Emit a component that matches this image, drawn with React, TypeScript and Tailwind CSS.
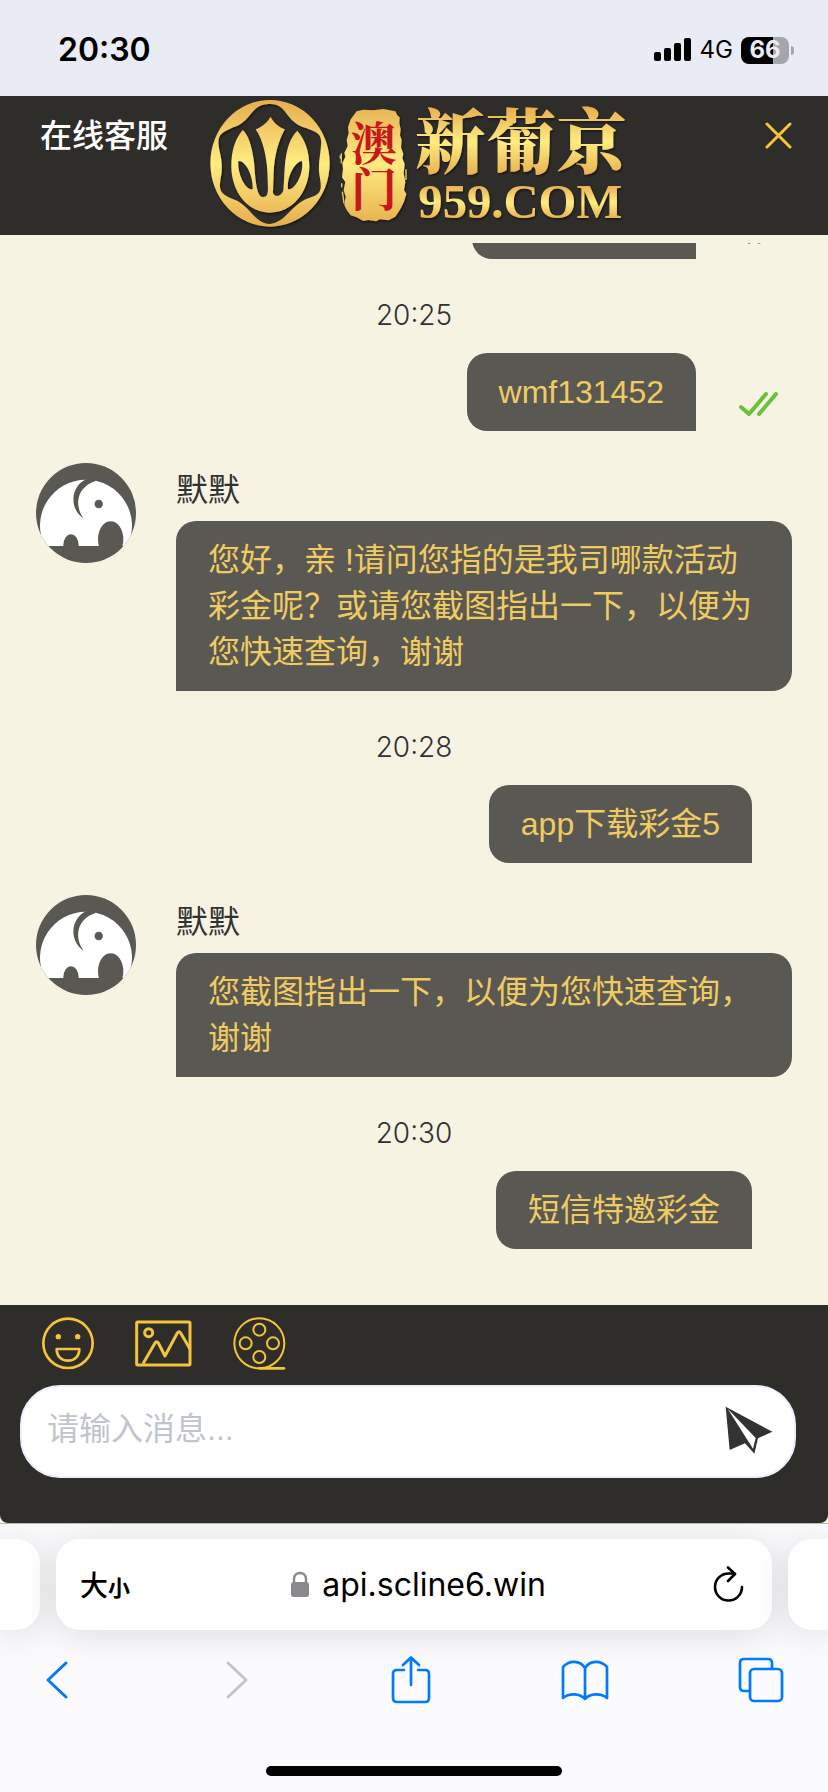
import { useState } from 'react'

type Message =
  | { id: number; from: 'user'; text: string; read?: boolean; time: string }
  | { id: number; from: 'agent'; name: string; text: string }

const messages: Message[] = [
  { id: 1, from: 'user', time: '20:25', text: 'wmf131452', read: true },
  { id: 2, from: 'agent', name: '默默', text: '您好，亲 !请问您指的是我司哪款活动彩金呢？或请您截图指出一下，以便为您快速查询，谢谢' },
  { id: 3, from: 'user', time: '20:28', text: 'app下载彩金5' },
  { id: 4, from: 'agent', name: '默默', text: '您截图指出一下，以便为您快速查询，谢谢' },
  { id: 5, from: 'user', time: '20:30', text: '短信特邀彩金' },
]

function StatusBar() {
  return (
    <div className="flex h-24 items-center justify-between bg-[#eaecf5] pr-[34px] pl-[58px] pt-1 text-black">
      <span className="text-[32px] leading-10 font-semibold">20:30</span>
      <div className="flex items-center gap-2">
        <svg className="h-6 w-[38px]" viewBox="0 0 38 24">
          <rect x="0" y="14" width="7" height="9" rx="2" />
          <rect x="10" y="10" width="7" height="13" rx="2" />
          <rect x="20" y="5" width="7" height="18" rx="2" />
          <rect x="30" y="0" width="7" height="23" rx="2" />
        </svg>
        <span className="text-2xl leading-8">4G</span>
        <div className="flex items-center gap-0.5">
          <div className="flex h-[27px] w-12 items-center justify-center rounded-lg bg-linear-to-r from-black from-66% to-[#a5a6ab] to-66% text-2xl font-bold text-[#eaecf5]">
            66
          </div>
          <div className="h-[9px] w-[3px] rounded-r-full bg-[#a5a6ab]"></div>
        </div>
      </div>
    </div>
  )
}

function Logo() {
  return (
    <svg className="h-[130px] w-[418px] shrink-0 overflow-visible" viewBox="30 27 1254 390" role="img" aria-label="澳门新葡京 959.COM">
      <defs>
        <linearGradient id="gold-emblem" gradientUnits="userSpaceOnUse" x1="0" y1="30" x2="0" y2="410">
          <stop offset="0" stopColor="#e6ad4e" />
          <stop offset="0.5" stopColor="#ffec80" />
          <stop offset="1" stopColor="#e6ad4e" />
        </linearGradient>
        <linearGradient id="gold-name" gradientUnits="userSpaceOnUse" x1="0" y1="55" x2="0" y2="255">
          <stop offset="0" stopColor="#e9b04f" />
          <stop offset="0.5" stopColor="#ffec80" />
          <stop offset="1" stopColor="#e9b04f" />
        </linearGradient>
        <linearGradient id="gold-domain" gradientUnits="userSpaceOnUse" x1="0" y1="288" x2="0" y2="386">
          <stop offset="0" stopColor="#e9b04f" />
          <stop offset="0.5" stopColor="#ffec80" />
          <stop offset="1" stopColor="#e9b04f" />
        </linearGradient>
        <filter id="logo-shadow" x="-5%" y="-5%" width="110%" height="110%">
          <feDropShadow dx="3" dy="4" stdDeviation="3" floodColor="#000" floodOpacity="0.6" />
        </filter>
      </defs>
      <g filter="url(#logo-shadow)">
        <g fill="url(#gold-emblem)" fillRule="evenodd">
          <path d="M31 220a179 190 0 1 0 358 0a179 190 0 1 0 -358 0Z M205 42C265 38 250 95 320 115C355 128 366 135 363 165C361 200 352 225 360 265C366 305 362 312 325 325C270 345 260 398 208 402C160 398 150 345 100 328C60 312 56 300 62 265C68 240 66 210 58 180C50 135 60 130 100 112C155 95 150 45 205 42Z" />
          <path d="M128 120C145 135 155 165 162 215C166 260 168 318 188 321C207 322 204 300 203 270C203 210 190 150 167 118C185 110 200 100 212 80C222 100 238 112 255 118C236 150 222 200 221 250L219 308C222 322 245 321 250 300C256 250 248 165 292 122C316 150 329 185 328 235C325 310 275 368 210 368C145 368 97 310 94 235C93 190 102 150 128 120Z M115 213C135 210 160 255 158 298C135 300 112 250 115 213Z M306 213C285 215 260 260 264 298C285 300 312 250 306 213Z" />
          <path d="M470 64L490 59L520 61L550 57L586 64L592 76L599 82L598 100L602 118L600 136L605 150L603 172L610 192L607 205L614 222L611 250L616 276L612 300L619 312L612 335L604 352L598 362L586 380L566 391L540 388L528 394L505 390L490 393L470 382L452 376L440 360L433 345L437 320L431 300L436 276L426 262L429 236L427 220L436 200L433 188L443 168L440 150L446 130L444 112L452 88Z" />
        </g>
        <path d="M424 190V220M421 196V206M425 280V292M427 305L432 340M618 238V270" fill="none" stroke="#e8c65c" strokeWidth="4" />
        <text x="645" y="233" fontSize="212" fontWeight="900" fill="url(#gold-name)" fontFamily="'Noto Serif CJK SC','Noto Sans CJK SC',serif">新葡京</text>
        <text x="655" y="384" fontSize="146" fontWeight="700" fill="url(#gold-domain)" fontFamily="'Liberation Serif',serif">959.COM</text>
      </g>
      <text
        x="522"
        y="88"
        fill="#c8161d"
        fontSize="138"
        fontWeight="700"
        fontFamily="'Noto Serif CJK SC','Noto Sans CJK SC',serif"
        className="[writing-mode:vertical-rl]"
      >
        澳门
      </text>
    </svg>
  )
}

function Avatar() {
  return (
    <svg className="size-[100px] shrink-0 rounded-full" viewBox="0 0 300 300">
      <rect width="300" height="300" fill="#5a5852" />
      <path d="M26 249A138 138 0 1 1 274 249Z" fill="#fff" />
      <g fill="#5a5852">
        <path d="M147 50C105 72 98 136 143 167C112 125 125 70 179 54L170 44Z" />
        <circle cx="188" cy="123" r="12.5" />
        <ellipse cx="105" cy="247" rx="23" ry="33" />
        <ellipse cx="224" cy="229" rx="38" ry="54" />
      </g>
    </svg>
  )
}

function ReadMark() {
  return (
    <svg className="mb-[15px] h-6 w-10" viewBox="0 0 40 24" fill="none" stroke="#67c23a" strokeWidth="4" strokeLinecap="round" strokeLinejoin="round">
      <path d="M3 15L11 22L28 2M21 22L38 2" />
    </svg>
  )
}

function UserRow({ text, read }: { text: string; read?: boolean }) {
  return (
    <div className={`flex items-end justify-end gap-[42px] ${read ? 'pr-[50px]' : 'pr-[76px]'}`}>
      <div className="rounded-[20px] rounded-br-none bg-[#5a5852] px-8 py-4 text-[#f0cb62]">{text}</div>
      {read && <ReadMark />}
    </div>
  )
}

function AgentRow({ name, text }: { name: string; text: string }) {
  return (
    <div className="flex gap-10 pt-8 pr-9 pl-9">
      <Avatar />
      <div className="min-w-0 flex-1 pt-1">
        <div className="mb-2 text-[#303133]">{name}</div>
        <div className="rounded-[20px] rounded-bl-none bg-[#5a5852] px-8 py-4 text-[#f0cb62]">{text}</div>
      </div>
    </div>
  )
}

function Composer() {
  const [draft, setDraft] = useState('')

  return (
    <footer className="bg-[#f7f3e3]">
      <div className="rounded-b-lg bg-[#2e2d29] pt-3 pr-8 pb-[45px] pl-5">
        <div className="mb-[15px] flex items-center gap-[41px] pl-[22px]">
          <button aria-label="表情">
            <svg className="h-[53px] w-[52px]" viewBox="0 0 156 159" fill="none" stroke="#f5c43c" strokeWidth="8">
              <circle cx="78" cy="79" r="74" />
              <path d="M44 96H112C112 118 98 131 78 131C58 131 44 118 44 96Z" strokeLinejoin="round" />
              <g fill="#f5c43c" stroke="none">
                <circle cx="49" cy="59" r="8" />
                <circle cx="107" cy="59" r="8" />
              </g>
            </svg>
          </button>
          <button aria-label="图片">
            <svg className="h-[53px] w-[57px]" viewBox="0 0 171 159" fill="none" stroke="#f5c43c" strokeWidth="9" strokeLinejoin="round">
              <rect x="5" y="15" width="160" height="129" rx="3" />
              <circle cx="41" cy="47" r="12" />
              <path d="M24 140L60 78Q65 70 70 78L90 117L127 48Q132 40 137 48L165 96" />
            </svg>
          </button>
          <button aria-label="视频">
            <svg className="h-[53px] w-[53px]" viewBox="0 0 159 159" fill="none" stroke="#f5c43c" strokeWidth="6">
              <circle cx="79" cy="79" r="75" />
              <circle cx="79" cy="38" r="18" />
              <circle cx="79" cy="120" r="18" />
              <circle cx="38" cy="79" r="18" />
              <circle cx="120" cy="79" r="18" />
              <path d="M79 154H153" strokeWidth="8" strokeLinecap="round" />
            </svg>
          </button>
        </div>
        <form
          className="flex h-[93px] items-center rounded-[40px] border-2 border-[#ecf0fd] bg-white pr-[21px] pl-[25px]"
          onSubmit={e => e.preventDefault()}
        >
          <input
            type="text"
            aria-label="消息"
            value={draft}
            onChange={e => setDraft(e.target.value)}
            placeholder="请输入消息..."
            className="mb-1.5 min-w-0 flex-1 font-['Liberation_Sans','Noto_Sans_CJK_SC',sans-serif] text-[#303133] outline-none placeholder:text-[#c0c4cc]"
          />
          <button className="mb-1" aria-label="发送">
            <svg className="size-12" viewBox="0 0 144 144" fill="#333">
              <path d="M2 2L14 132L60 112L88 143L99 97L142 77Z" />
              <path d="M8 8L92 96L84 128Z" fill="#fff" />
            </svg>
          </button>
        </form>
      </div>
    </footer>
  )
}

function BrowserBar() {
  return (
    <div className="overflow-hidden border-t border-[#b9b8ba] bg-[#fbfbfe] pt-[15px] pb-4">
      <div className="flex h-[91px] gap-4">
        <div className="w-10 rounded-r-3xl bg-white shadow-[0_4px_36px_rgba(0,0,0,0.13)]"></div>
        <div className="flex flex-1 items-center justify-between rounded-3xl bg-white pr-7 pl-6 text-black shadow-[0_4px_36px_rgba(0,0,0,0.13)]">
          <button className="flex w-[68px] items-baseline pt-1" aria-label="大小">
            <span className="text-[28px] font-medium">大</span>
            <span className="text-[22px] font-bold">小</span>
          </button>
          <div className="flex items-center gap-3">
            <svg className="h-[27px] w-5" viewBox="0 0 20 27">
              <path d="M4 13V8C4 0 16 0 16 8V13" fill="none" stroke="#8a8a8e" strokeWidth="2.5" />
              <rect x="1" y="11" width="18" height="15" rx="3" fill="#8a8a8e" />
            </svg>
            <span>api.scline6.win</span>
          </div>
          <button className="mb-0.5 flex w-14 justify-end" aria-label="重新载入">
            <svg className="h-9 w-8" viewBox="0 0 32 36" fill="none" stroke="#000" strokeWidth="2.6" strokeLinecap="round" strokeLinejoin="round">
              <path d="M30 21A13.5 13.5 0 1 1 16.500 7.500H23M16 1.500L23 8L16 15" />
            </svg>
          </button>
        </div>
        <div className="w-10 rounded-l-3xl bg-white shadow-[0_4px_36px_rgba(0,0,0,0.13)]"></div>
      </div>
      <nav className="mt-[26px] flex justify-between pr-[43px] pl-8">
        <button aria-label="后退">
          <svg className="size-12" viewBox="0 0 48 48" fill="none" stroke="#007aff" strokeWidth="3" strokeLinecap="round" strokeLinejoin="round">
            <path d="M34 7L16 24L34 41" />
          </svg>
        </button>
        <button aria-label="前进" disabled>
          <svg className="size-12" viewBox="0 0 48 48" fill="none" stroke="#c4c4c6" strokeWidth="3" strokeLinecap="round" strokeLinejoin="round">
            <path d="M20 7L38 24L20 41" />
          </svg>
        </button>
        <button aria-label="分享">
          <svg className="size-12" viewBox="0 0 48 48" fill="none" stroke="#007aff" strokeWidth="2.7" strokeLinecap="round" strokeLinejoin="round">
            <path d="M19 14H12Q8 14 8 18V42Q8 46 12 46H40Q44 46 44 42V18Q44 14 40 14H33M26 29V2M18 9L26 1.500L34 9" />
          </svg>
        </button>
        <button aria-label="书签">
          <svg className="size-12" viewBox="0 0 48 48" fill="none" stroke="#007aff" strokeWidth="2.7" strokeLinecap="round" strokeLinejoin="round">
            <path d="M24 12C19 4 8 4 2 11V42C8 37 19 37 24 43C29 37 40 37 46 42V11C40 4 29 4 24 12V43" />
          </svg>
        </button>
        <button aria-label="标签页">
          <svg className="size-12" viewBox="0 0 48 48" fill="none" stroke="#007aff" strokeWidth="2.7" strokeLinejoin="round">
            <rect x="13" y="13" width="32" height="32" rx="4" />
            <path d="M35 13V7Q35 3 31 3H7Q3 3 3 7V31Q3 35 7 35H13" />
          </svg>
        </button>
      </nav>
      <div className="mx-auto mt-[62px] h-2.5 w-[296px] rounded-full bg-black"></div>
    </div>
  )
}

export default function App() {
  return (
    <div
      lang="zh-CN"
      className="flex flex-col bg-[#f7f3e3] font-['Inter','Noto_Sans_CJK_SC',sans-serif] text-[32px] leading-[46px]"
    >
      <StatusBar />
      <header className="flex items-start bg-[#2e2d29] pt-[3px] pr-9 pb-1.5 pl-10">
        <h1 className="mt-[14px] mr-[42px] shrink-0 font-medium text-white">在线客服</h1>
        <Logo />
        <button className="mt-[23px] ml-auto" aria-label="关闭">
          <svg className="size-[27px]" viewBox="0 0 27 27" fill="none" stroke="#f5c63a" strokeWidth="3" strokeLinecap="round">
            <path d="M2 2L25 25M25 2L2 25" />
          </svg>
        </button>
      </header>

      <main className="pt-2 pb-14 font-['Liberation_Sans','Noto_Sans_CJK_SC',sans-serif]">
        {/* tail of the previous message, scrolled out of view */}
        <div className="flex h-4 items-end justify-end gap-[42px] overflow-hidden pr-[50px]">
          <div className="h-[78px] w-[224px] rounded-[20px] rounded-br-none bg-[#5a5852]"></div>
          <ReadMark />
        </div>
        {messages.map(msg =>
          msg.from === 'user' ? (
            <div key={msg.id}>
              <div className="pt-[33px] pb-[15px] text-center font-['Inter'] text-[28px] font-light text-[#303133]">{msg.time}</div>
              <UserRow text={msg.text} read={msg.read} />
            </div>
          ) : (
            <AgentRow key={msg.id} name={msg.name} text={msg.text} />
          )
        )}
      </main>

      <Composer />
      <BrowserBar />
    </div>
  )
}
